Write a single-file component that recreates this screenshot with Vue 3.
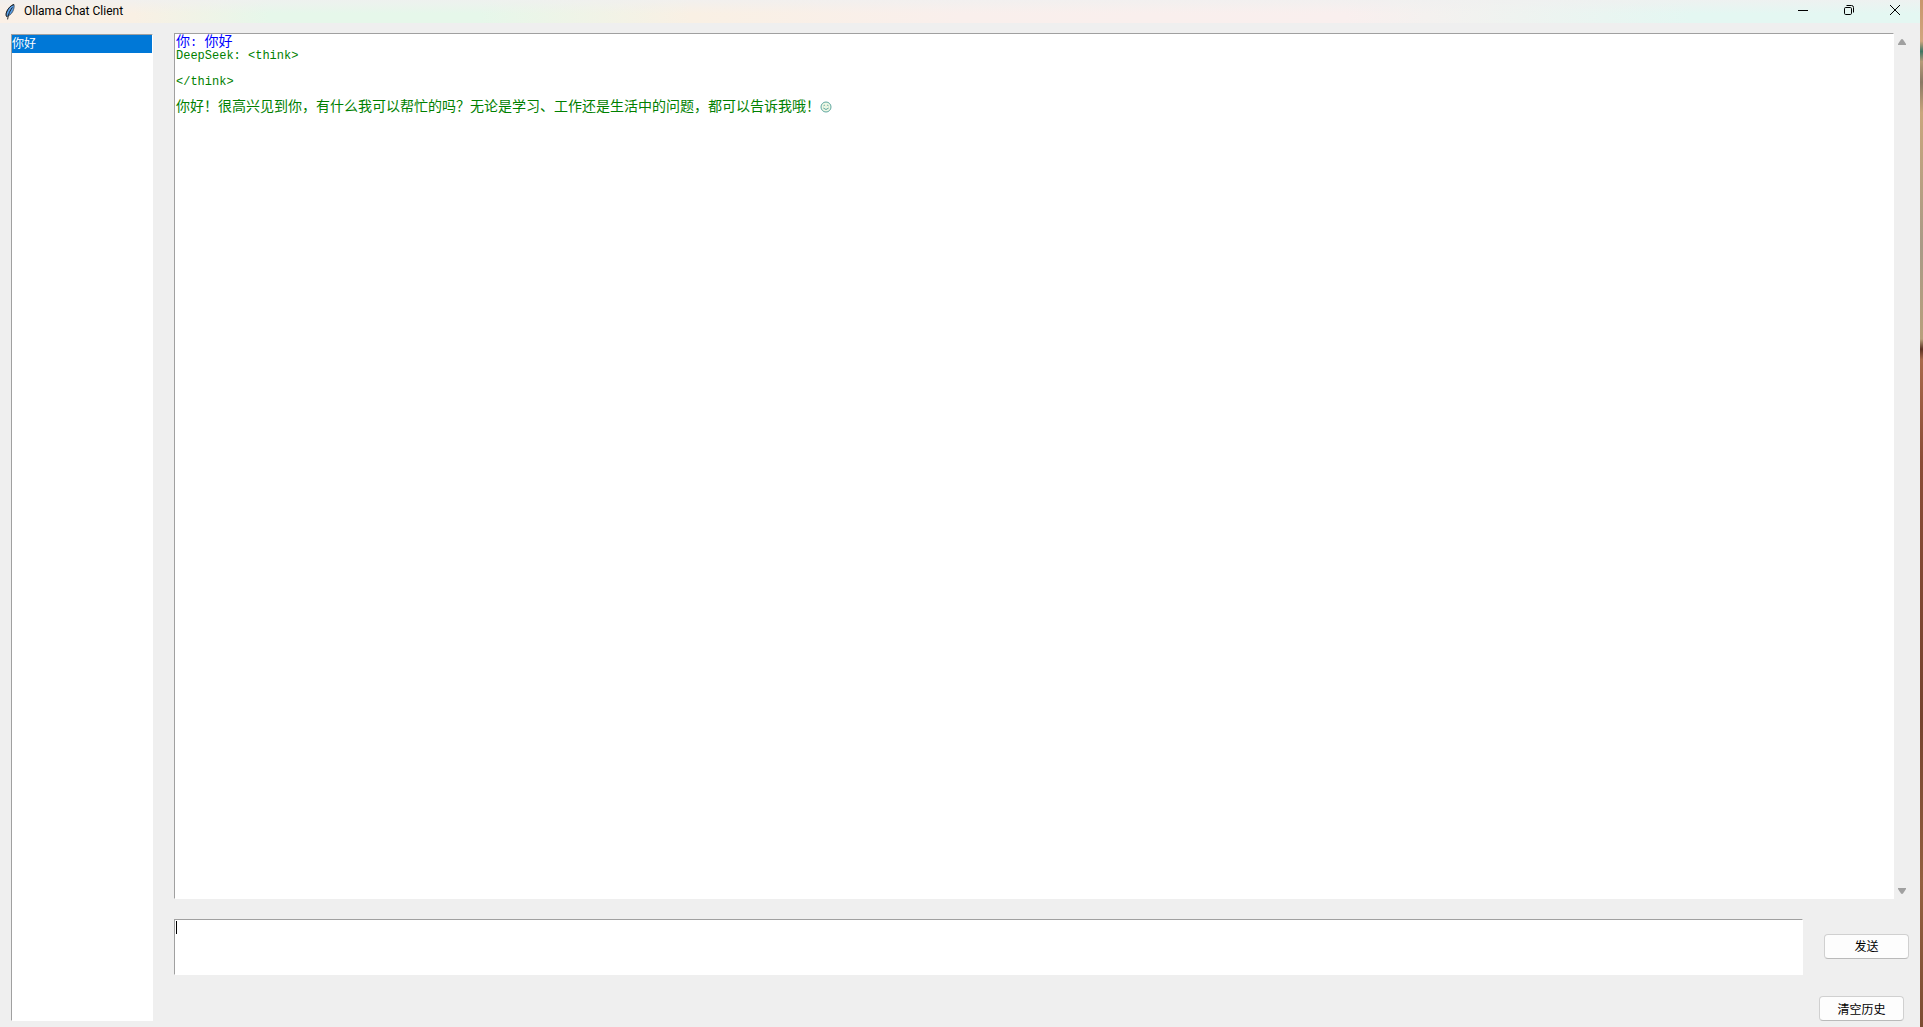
<template>
  <div class="desktop">
    <div class="window">
      <header class="titlebar">
        <svg class="feather" viewBox="0 0 10 16" aria-hidden="true">
          <path d="M9 .5C6 1 3 4.500 1.600 8c-.6 1.800-.6 3.400 0 4.600C3.800 12 6.600 10 7.800 7.400 9 5 9.400 2.600 9 .5z" fill="#5b9fe6" stroke="#2a3038" stroke-width=".7" />
          <path d="M9 .5C5.500 1.500 3 4.500 1.600 8c-.6 1.800-.6 3.400 0 4.600" fill="none" stroke="#20242a" stroke-width="1" />
          <path d="M7.400 3.400C5 6.600 3.200 10 2.600 15.400" fill="none" stroke="#101418" stroke-width=".9" />
        </svg>
        <h1>Ollama Chat Client</h1>
        <div class="controls">
          <button aria-label="Minimize">
            <svg viewBox="0 0 10 10"><path d="M0 5.500h10" /></svg>
          </button>
          <button aria-label="Restore">
            <svg viewBox="0 0 10 10">
              <rect x=".5" y="2.500" width="7" height="7" rx="1.200" />
              <path d="M2.500.5H7.500a2 2 0 0 1 2 2V7.500" />
            </svg>
          </button>
          <button aria-label="Close">
            <svg viewBox="0 0 10 10"><path d="M0 0l10 10M10 0L0 10" /></svg>
          </button>
        </div>
      </header>

      <main class="body">
        <nav class="history sunken">
          <button
            v-for="(item, i) in history"
            :key="i"
            :class="{ active: i === current }"
            @click="current = i"
          >{{ item }}</button>
        </nav>

        <section class="chat">
          <div class="log-row">
            <div class="log sunken">
              <p class="user">你<span class="en">: </span>你好</p>
              <p class="bot"><span class="en">DeepSeek: &lt;think&gt;</span></p>
              <p class="bot"></p>
              <p class="bot"><span class="en">&lt;/think&gt;</span></p>
              <p class="bot"></p>
              <p class="bot">
                你好！很高兴见到你，有什么我可以帮忙的吗？无论是学习、工作还是生活中的问题，都可以告诉我哦！<svg class="smile" viewBox="0 0 12 12" role="img" aria-label="😊">
                  <circle cx="6" cy="6" r="5" />
                  <path d="M3.500 4.800q.8-1.200 1.600 0M6.900 4.800q.8-1.200 1.600 0M3.300 7q2.700 3 5.400 0" />
                </svg>
              </p>
            </div>
            <div class="scrollbar">
              <svg viewBox="0 0 8 6"><path d="M0 6V5L3 .5Q4-.4 5 .5L8 5V6z" /></svg>
              <svg viewBox="0 0 8 6"><path d="M0 0V1L3 5.500Q4 6.400 5 5.500L8 1V0z" /></svg>
            </div>
          </div>

          <form class="composer" @submit.prevent="send">
            <div class="entry">
              <textarea v-model="draft" class="sunken" aria-label="消息"></textarea>
              <span v-if="!draft" class="caret"></span>
            </div>
            <button class="btn">发送</button>
          </form>

          <button class="btn clear" @click="history = []">清空历史</button>
        </section>
      </main>
    </div>
    <div class="wallpaper"></div>
  </div>
</template>

<script setup>
import { ref } from 'vue';

const history = ref(['你好'])
const current = ref(0)
const draft = ref('')

function send() {
  if (!draft.value.trim()) return
  history.value.push(draft.value)
  draft.value = ''
}
</script>

<style>
body {
  margin: 0;
}
</style>

<style scoped>
.desktop {
  display: flex;
  height: 100vh;
  font-family: Roboto, "Noto Sans CJK SC", sans-serif;
  font-size: 12px;
  color: #000;
}

.window {
  flex: 1;
  min-width: 0;
  display: flex;
  flex-direction: column;
  background: #efefef;
}

.wallpaper {
  width: 3px;
  background: linear-gradient(#c8966c 0, #d0a67e 4%, #3d7462 5%, #b69a78 6%, #8a7864 8%, #c9a67c 11%, #a99a86 24%, #b8a07c 33%, #5a3022 34%, #a8694a 35%, #8a4c36 45%, #75432e 70%, #93603f 86%, #7c4c32 100%);
}

/* 标题栏 */
.titlebar {
  display: flex;
  align-items: center;
  height: 23px;
  padding-left: 5px;
  background:
    linear-gradient(rgba(240, 240, 240, 0.8), rgba(240, 240, 240, 0) 60%),
    linear-gradient(90deg, #fbf0e6 0, #f9f0e4 7%, #e6f7ea 14%, #e6f7ea 25%, #f9f0e4 36%, #f9efec 50%, #f9efee 70%, #e4f7f2 88%, #e4f7f2 100%);
}

.feather {
  width: 10px;
  height: 16px;
  margin-right: 9px;
}

h1 {
  margin: 0;
  font-size: 12px;
  line-height: 23px;
  font-weight: 400;
}

.controls {
  display: flex;
  align-self: flex-start;
  margin-left: auto;
  margin-right: 2px;
}

.controls button {
  display: flex;
  align-items: center;
  justify-content: center;
  width: 46px;
  height: 20px;
  padding: 0;
  border: 0;
  background: none;
}

.controls svg {
  width: 10px;
  height: 10px;
  fill: none;
  stroke: #000;
}

/* 主体 */
.body {
  flex: 1;
  min-height: 0;
  display: flex;
  gap: 21px;
  padding: 10px 9px 6px 11px;
}

.sunken {
  box-sizing: border-box;
  background: #fff;
  border: 1px solid #fff;
  border-top-color: #a0a0a0;
  border-left-color: #a0a0a0;
}

.history {
  width: 142px;
  margin-top: 1px;
}

.history button {
  display: block;
  width: 100%;
  height: 18px;
  padding: 0;
  border: 0;
  background: none;
  font: inherit;
  line-height: 18px;
  text-align: left;
}

.history button.active {
  background: #0078d7;
  color: #fff;
}

.chat {
  flex: 1;
  min-width: 0;
  display: flex;
  flex-direction: column;
}

.log-row {
  flex: 1;
  min-height: 0;
  display: flex;
}

.log {
  flex: 1;
  min-width: 0;
  padding: 0 1px;
  font-family: "Noto Sans CJK SC", sans-serif;
  font-size: 14px;
}

.log p {
  margin: 0;
  height: 13px;
  line-height: 13px;
}

.en {
  font-family: "Liberation Mono", monospace;
  font-size: 12px;
  white-space: pre;
}

.user {
  color: #0000ff;
}

.bot {
  color: #008000;
}

.smile {
  width: 12px;
  height: 12px;
  vertical-align: -2px;
  fill: #eef7e4;
  stroke: #5fa8a0;
}

.scrollbar {
  display: flex;
  flex-direction: column;
  justify-content: space-between;
  width: 17px;
  padding: 6px 0 5px 4px;
  box-sizing: border-box;
}

.scrollbar svg {
  width: 8px;
  height: 6px;
  fill: #a0a0a0;
}

.composer {
  display: flex;
  align-items: center;
  gap: 21px;
  margin: 20px 2px 21px 0;
}

.entry {
  position: relative;
  flex: 1;
  height: 56px;
}

textarea {
  display: block;
  width: 100%;
  height: 100%;
  padding: 1px;
  border-radius: 0;
  outline: 0;
  resize: none;
  font-family: "Liberation Mono", "Noto Sans CJK SC", monospace;
  font-size: 12px;
  line-height: 13px;
}

.caret {
  position: absolute;
  left: 2px;
  top: 2px;
  width: 1px;
  height: 13px;
  background: #000;
}

.entry:focus-within .caret {
  display: none;
}

.btn {
  box-sizing: border-box;
  width: 85px;
  height: 25px;
  padding: 0 0 1px;
  border: 1px solid #d0d0d0;
  border-bottom-color: #bababa;
  border-radius: 4px;
  background: #fdfdfd;
  color: #000;
  font: inherit;
}

.composer .btn {
  margin-bottom: 2px;
}

.clear {
  align-self: flex-end;
  margin-right: 7px;
}
</style>
